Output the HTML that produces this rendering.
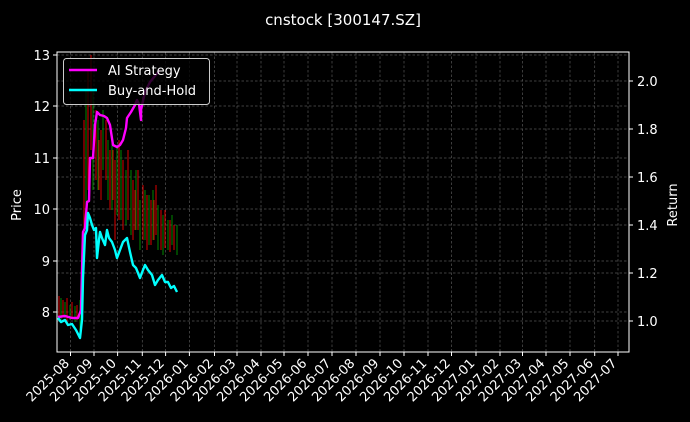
<!DOCTYPE html>
<html><head><style>
html,body{margin:0;padding:0;background:#000;}
svg{display:block;font-family:"DejaVu Sans","Liberation Sans",sans-serif;}
</style></head><body>
<svg width="690" height="422" viewBox="0 0 690 422" xmlns="http://www.w3.org/2000/svg">
<rect width="690" height="422" fill="#000"/>
<text x="343" y="25" fill="#fff" font-size="15" text-anchor="middle">cnstock [300147.SZ]</text>
<g stroke="#555" stroke-width="0.7" stroke-dasharray="2.5,2">
<line x1="57" y1="55" x2="629" y2="55"/><line x1="57" y1="106" x2="629" y2="106"/><line x1="57" y1="158" x2="629" y2="158"/><line x1="57" y1="209" x2="629" y2="209"/><line x1="57" y1="261" x2="629" y2="261"/><line x1="57" y1="312" x2="629" y2="312"/>
<line x1="57" y1="81" x2="629" y2="81"/><line x1="57" y1="129" x2="629" y2="129"/><line x1="57" y1="177" x2="629" y2="177"/><line x1="57" y1="225" x2="629" y2="225"/><line x1="57" y1="273" x2="629" y2="273"/><line x1="57" y1="321" x2="629" y2="321"/>
<path d="M70.5 52V352M94 52V352M117.6 52V352M142.3 52V352M165.6 52V352M189.4 52V352M214.5 52V352M237 52V352M261 52V352M284 52V352M308 52V352M332 52V352M356 52V352M380 52V352M404 52V352M428 52V352M451.5 52V352M476 52V352M500 52V352M522.5 52V352M546 52V352M570 52V352M594.7 52V352M618 52V352"/>
</g>
<g stroke-width="1">
<path stroke="#d00" d="M59 296V318M63 300V316M67 298V322M72 302V318M77 305V320M84 120V240M88 70V190M91 55V150M96 110V180M101 130V200M106 120V180M110 150V210M115 160V240M119 140V220M123 160V230M128 150V220M133 180V240M138 170V230M143 185V240M147 195V250M151 200V245M156 185V235M161 210V250M165 210V248M170 220V252M174 225V250M99 140V190M113 150V200M135 190V230M154 200V240"/>
<path stroke="#080" d="M61 298V320M65 302V318M70 305V320M75 306V322M80 300V330M86 90V210M93 90V190M98 120V190M103 110V170M108 140V200M112 140V210M117 145V215M121 150V220M126 170V225M131 170V235M136 170V230M140 200V250M145 190V240M149 195V245M153 190V240M158 205V250M163 215V255M168 220V250M172 215V245M177 225V255"/>
</g>
<polyline fill="none" stroke="#f0f" stroke-width="2.4" stroke-linejoin="round" points="58,317 65,316 72,318 78,318 81,310 83,232 85,228 87,202 89,201 90,158 93,158 95,125 97,112 100,115 104,116 107,118 110,125 113,145 117,147 120,145 123,140 126,128 127,118 131,112 135,105 137,100 139,104 141,120 141,110 145,92 150,82 155,76 160,70"/>
<polyline fill="none" stroke="#0ff" stroke-width="2.4" stroke-linejoin="round" points="58,318 61,322 65,320 68,325 72,324 76,330 80,338 82,320 83,278 85,235 87,230 88,213 90,218 92,225 94,230 96,228 97,258 99,240 100,232 102,238 105,245 107,230 109,238 112,242 115,250 117,258 120,250 123,242 125,240 127,238 130,252 133,265 136,268 140,278 143,270 145,265 148,270 152,275 155,285 158,280 162,275 165,282 168,282 171,288 174,286 177,292"/>
<rect x="63.5" y="58.5" width="146" height="46" rx="3" fill="#000" fill-opacity="0.8" stroke="#ccc" stroke-width="1"/>
<line x1="69" y1="70" x2="97" y2="70" stroke="#f0f" stroke-width="2.4"/>
<line x1="69" y1="90" x2="97" y2="90" stroke="#0ff" stroke-width="2.4"/>
<text x="108" y="75" fill="#fff" font-size="13">AI Strategy</text>
<text x="108" y="95" fill="#fff" font-size="13">Buy-and-Hold</text>
<rect x="57" y="52" width="572" height="300" fill="none" stroke="#fff" stroke-width="1"/>
<g stroke="#fff" stroke-width="1">
<path d="M53 55H57M53 106H57M53 158H57M53 209H57M53 261H57M53 312H57"/>
<path d="M629 81H633M629 129H633M629 177H633M629 225H633M629 273H633M629 321H633"/>
<path d="M70.5 352V356M94 352V356M117.6 352V356M142.3 352V356M165.6 352V356M189.4 352V356M214.5 352V356M237 352V356M261 352V356M284 352V356M308 352V356M332 352V356M356 352V356M380 352V356M404 352V356M428 352V356M451.5 352V356M476 352V356M500 352V356M522.5 352V356M546 352V356M570 352V356M594.7 352V356M618 352V356"/>
</g>
<g fill="#fff" font-size="13" text-anchor="end">
<text x="50" y="60">13</text><text x="50" y="111">12</text><text x="50" y="163">11</text><text x="50" y="214">10</text><text x="50" y="266">9</text><text x="50" y="317">8</text>
</g>
<g fill="#fff" font-size="13">
<text x="637" y="86">2.0</text><text x="637" y="134">1.8</text><text x="637" y="182">1.6</text><text x="637" y="230">1.4</text><text x="637" y="278">1.2</text><text x="637" y="326">1.0</text>
</g>
<text transform="translate(21,205) rotate(-90)" fill="#fff" font-size="13" text-anchor="middle">Price</text>
<text transform="translate(677,205) rotate(-90)" fill="#fff" font-size="13" text-anchor="middle">Return</text>
<g fill="#fff" font-size="13" text-anchor="end">
<text transform="translate(70,364) rotate(-45)">2025-08</text>
<text transform="translate(93.5,364) rotate(-45)">2025-09</text>
<text transform="translate(117,364) rotate(-45)">2025-10</text>
<text transform="translate(142,364) rotate(-45)">2025-11</text>
<text transform="translate(165,364) rotate(-45)">2025-12</text>
<text transform="translate(189,364) rotate(-45)">2026-01</text>
<text transform="translate(214,364) rotate(-45)">2026-02</text>
<text transform="translate(236.5,364) rotate(-45)">2026-03</text>
<text transform="translate(260.5,364) rotate(-45)">2026-04</text>
<text transform="translate(283.5,364) rotate(-45)">2026-05</text>
<text transform="translate(307.5,364) rotate(-45)">2026-06</text>
<text transform="translate(331.5,364) rotate(-45)">2026-07</text>
<text transform="translate(355.5,364) rotate(-45)">2026-08</text>
<text transform="translate(379.5,364) rotate(-45)">2026-09</text>
<text transform="translate(403.5,364) rotate(-45)">2026-10</text>
<text transform="translate(427.5,364) rotate(-45)">2026-11</text>
<text transform="translate(451,364) rotate(-45)">2026-12</text>
<text transform="translate(475.5,364) rotate(-45)">2027-01</text>
<text transform="translate(499.5,364) rotate(-45)">2027-02</text>
<text transform="translate(522,364) rotate(-45)">2027-03</text>
<text transform="translate(545.5,364) rotate(-45)">2027-04</text>
<text transform="translate(569.5,364) rotate(-45)">2027-05</text>
<text transform="translate(594,364) rotate(-45)">2027-06</text>
<text transform="translate(617.5,364) rotate(-45)">2027-07</text>
</g>
</svg>
</body></html>
